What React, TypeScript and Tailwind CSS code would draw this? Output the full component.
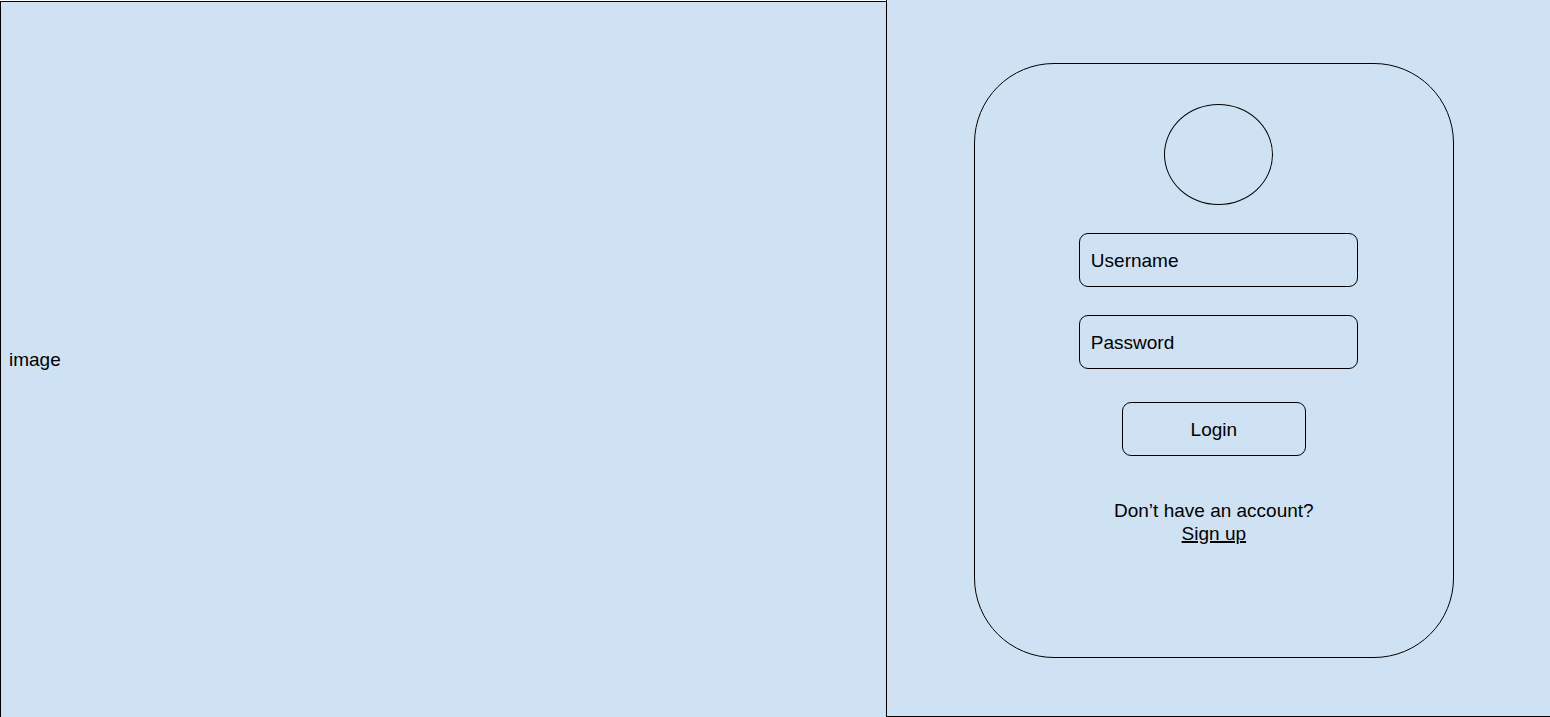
import { useState } from "react";

type FieldProps = {
  id: string;
  label: string;
  type: string;
  value: string;
  onChange: (value: string) => void;
};

function Field({ id, label, type, value, onChange }: FieldProps) {
  return (
    <div className="relative w-full max-w-[279px]">
      <input
        id={id}
        name={id}
        type={type}
        value={value}
        placeholder=" "
        onChange={(event) => onChange(event.target.value)}
        className="peer block h-[54px] w-full rounded-[9px] border border-black bg-transparent px-[11px]"
      />
      <label
        htmlFor={id}
        className="pointer-events-none absolute inset-y-0 left-3 flex items-center opacity-0 peer-placeholder-shown:opacity-100"
      >
        {label}
      </label>
    </div>
  );
}

export default function App() {
  const [username, setUsername] = useState("");
  const [password, setPassword] = useState("");

  return (
    <main className="grid min-h-screen grid-cols-[4fr_3fr] bg-white font-['Liberation_Sans',Arial,sans-serif] text-[19px] leading-[23px] text-black">
      <section className="mt-px flex items-center border-t border-l border-black bg-[#cfe2f3] px-2">
        <p>image</p>
      </section>

      <section className="flex items-center justify-center border-b border-l border-black bg-[#cfe2f3] pt-[63px] pr-[9px] pb-[58px]">
        <form
          onSubmit={(event) => event.preventDefault()}
          className="flex w-full max-w-[480px] flex-col items-center rounded-[80px] border border-black pt-10 pb-[112px]"
        >
          <div className="flex w-full flex-col items-center gap-7 pl-[9px]">
            <div className="h-[101px] w-[109px] rounded-[50%] border border-black" />
            <Field id="username" label="Username" type="text" value={username} onChange={setUsername} />
            <Field id="password" label="Password" type="password" value={password} onChange={setPassword} />
          </div>
          <button
            type="submit"
            className="mt-[33px] h-[54px] w-[184px] rounded-[9px] border border-black"
          >
            Login
          </button>
          <p className="mt-[43px] text-center">
            Don’t have an account?
            <br />
            <a href="#sign-up" className="underline decoration-2">
              Sign up
            </a>
          </p>
        </form>
      </section>
    </main>
  );
}
